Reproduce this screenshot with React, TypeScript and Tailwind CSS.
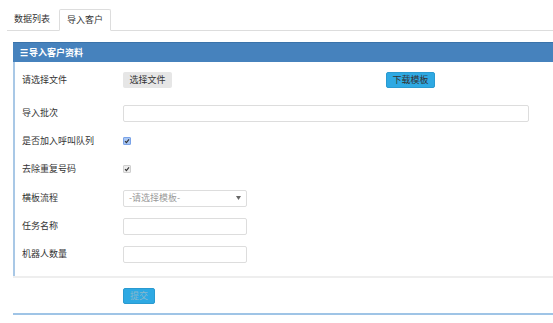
import React from 'react';

const font = { fontFamily: '"Noto Sans CJK SC", "Noto Sans", sans-serif' };

const Check = ({ focused }: { focused?: boolean }) => (
  <span
    className={`flex items-center justify-center w-[8px] h-[8px] rounded-[1px] border ${
      focused ? 'bg-[#a8c6f4] border-[#7aa3e8]' : 'bg-[#ececec] border-[#cfcfcf]'
    }`}
  >
    <svg width="6" height="6" viewBox="0 0 6 6">
      <path d="M1 3.2 L2.4 4.6 L5 1.4" stroke="#333" strokeWidth="1.1" fill="none" />
    </svg>
  </span>
);

const Row = ({ label, children, className = '' }: { label: string; children?: React.ReactNode; className?: string }) => (
  <div className={`flex items-center h-[28px] ${className}`}>
    <div className="w-[101px] shrink-0 text-[9px] text-[#333]">{label}</div>
    {children}
  </div>
);

const Field = ({ w = 'w-[124px]' }: { w?: string }) => (
  <div className={`${w} h-[17px] border border-[#ddd] rounded-[2px] bg-white`} />
);

export default function App() {
  return (
    <div className="w-[553px] h-[323px] bg-white overflow-hidden" style={font}>
      {/* Tabs */}
      <div className="flex items-end ml-[7px] pt-[9px] border-b border-[#ddd] h-[31px]">
        <div className="h-[22px] px-[7px] flex items-center text-[9px] text-[#333]">数据列表</div>
        <div className="h-[22px] ml-[2px] px-[7px] flex items-center text-[9px] text-[#333] bg-white border border-[#ddd] border-b-white rounded-t-[2px] -mb-px">
          导入客户
        </div>
      </div>

      {/* Panel */}
      <div className="ml-[13px] mt-[11px] w-[560px]">
        <div className="h-[20px] bg-[#4682bd] border-t border-[#3a73aa] flex items-center pl-[7px] text-white text-[9px] font-bold">
          <span className="mr-[1px] text-[9px]">☰</span>导入客户资料
        </div>
        <div className="border-l-2 border-[#a9c8e6] pl-[7px] pt-[4px] pb-[8px]">
          <Row label="请选择文件">
            <div className="w-[49px] h-[16px] rounded-[2px] bg-[#e6e6e6] flex items-center justify-center text-[9px] text-[#333]">选择文件</div>
            <div className="ml-[214px] w-[49px] h-[16px] rounded-[2px] bg-[#2ea9e3] border border-[#2a9ad0] flex items-center justify-center text-[9px] text-[#333]">下载模板</div>
          </Row>
          <Row label="导入批次" className="mt-[5px]">
            <Field w="w-[406px]" />
          </Row>
          <Row label="是否加入呼叫队列">
            <Check focused />
          </Row>
          <Row label="去除重复号码">
            <Check />
          </Row>
          <Row label="横板流程" className="mt-[1px]">
            <div className="w-[124px] h-[17px] border border-[#ddd] rounded-[2px] flex items-center justify-between pl-[5px] pr-[5px] text-[9px] text-[#999]">
              <span>-请选择模板-</span>
              <svg width="5" height="4" viewBox="0 0 5 4">
                <path d="M0 0 H5 L2.5 4 Z" fill="#666" />
              </svg>
            </div>
          </Row>
          <Row label="任务名称">
            <Field />
          </Row>
          <Row label="机器人数量">
            <Field />
          </Row>
        </div>
        <div className="border-t-2 border-[#eee] pt-[10px] pb-[9px] pl-[110px] border-b-2 border-b-[#9fc4e6]">
          <div className="w-[32px] h-[16px] rounded-[2px] bg-[#2ea9e3] border border-[#2a9ad0] flex items-center justify-center text-[9px] text-[#8ab8cc]">提交</div>
        </div>
      </div>
    </div>
  );
}
